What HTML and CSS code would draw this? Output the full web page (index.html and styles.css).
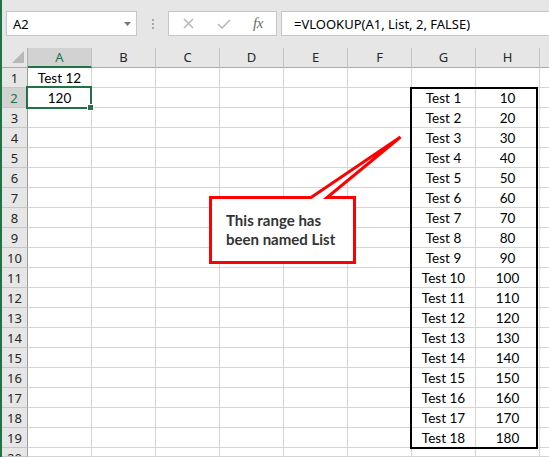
FILE: index.html
```html
<!DOCTYPE html>
<html>
<head>
<meta charset="utf-8">
<link rel="stylesheet" href="styles.css">
</head>
<body>
<div class="app">
  <div class="fbar">
    <div class="namebox"><span>A2</span><svg class="caret" width="7" height="4" viewBox="0 0 7 4"><path d="M0 0H7L3.5 4Z"/></svg></div>
    <div class="sep"><i></i><i></i><i></i></div>
    <div class="icons">
      <span class="ic ic-x"><svg width="11" height="11" viewBox="0 0 11 11"><path d="M1 1L10 10M10 1L1 10"/></svg></span>
      <span class="ic ic-ok"><svg width="14" height="10" viewBox="0 0 14 10"><path d="M1 5L5 9L13 1"/></svg></span>
      <span class="ic ic-fx">fx</span>
    </div>
    <div class="formula">=VLOOKUP(A1, List, 2, FALSE)</div>
  </div>
  <div class="sheet">
    <div class="corner"><span class="tri"></span></div><div class="ch sel">A</div><div class="ch">B</div><div class="ch">C</div><div class="ch">D</div><div class="ch">E</div><div class="ch">F</div><div class="ch">G</div><div class="ch">H</div><div class="ch last"></div>

    <div class="rh">1</div><div class="c">Test 12</div><div class="c"></div><div class="c"></div><div class="c"></div><div class="c"></div><div class="c"></div><div class="c"></div><div class="c"></div><div class="c last"></div>
    <div class="rh sel">2</div><div class="c anchor">120<span class="selbox"></span><span class="handle"></span></div><div class="c"></div><div class="c"></div><div class="c"></div><div class="c"></div><div class="c"></div><div class="c anchor">Test 1<span class="rangebox"></span></div><div class="c">10</div><div class="c last"></div>
    <div class="rh">3</div><div class="c"></div><div class="c"></div><div class="c"></div><div class="c"></div><div class="c"></div><div class="c"></div><div class="c">Test 2</div><div class="c">20</div><div class="c last"></div>
    <div class="rh">4</div><div class="c"></div><div class="c"></div><div class="c"></div><div class="c"></div><div class="c"></div><div class="c"></div><div class="c">Test 3</div><div class="c">30</div><div class="c last"></div>
    <div class="rh">5</div><div class="c"></div><div class="c"></div><div class="c"></div><div class="c"></div><div class="c"></div><div class="c"></div><div class="c">Test 4</div><div class="c">40</div><div class="c last"></div>
    <div class="rh">6</div><div class="c"></div><div class="c"></div><div class="c"></div><div class="c"></div><div class="c"></div><div class="c"></div><div class="c">Test 5</div><div class="c">50</div><div class="c last"></div>
    <div class="rh">7</div><div class="c"></div><div class="c"></div><div class="c"></div><div class="c"></div><div class="c"></div><div class="c"></div><div class="c">Test 6</div><div class="c">60</div><div class="c last"></div>
    <div class="rh">8</div><div class="c"></div><div class="c"></div><div class="c"></div><div class="c"></div><div class="c"></div><div class="c"></div><div class="c">Test 7</div><div class="c">70</div><div class="c last"></div>
    <div class="rh">9</div><div class="c"></div><div class="c"></div><div class="c"></div><div class="c"></div><div class="c"></div><div class="c"></div><div class="c">Test 8</div><div class="c">80</div><div class="c last"></div>
    <div class="rh">10</div><div class="c"></div><div class="c"></div><div class="c"></div><div class="c"></div><div class="c"></div><div class="c"></div><div class="c">Test 9</div><div class="c">90</div><div class="c last"></div>
    <div class="rh">11</div><div class="c"></div><div class="c"></div><div class="c"></div><div class="c"></div><div class="c"></div><div class="c"></div><div class="c">Test 10</div><div class="c">100</div><div class="c last"></div>
    <div class="rh">12</div><div class="c"></div><div class="c"></div><div class="c"></div><div class="c"></div><div class="c"></div><div class="c"></div><div class="c">Test 11</div><div class="c">110</div><div class="c last"></div>
    <div class="rh">13</div><div class="c"></div><div class="c"></div><div class="c"></div><div class="c"></div><div class="c"></div><div class="c"></div><div class="c">Test 12</div><div class="c">120</div><div class="c last"></div>
    <div class="rh">14</div><div class="c"></div><div class="c"></div><div class="c"></div><div class="c"></div><div class="c"></div><div class="c"></div><div class="c">Test 13</div><div class="c">130</div><div class="c last"></div>
    <div class="rh">15</div><div class="c"></div><div class="c"></div><div class="c"></div><div class="c"></div><div class="c"></div><div class="c"></div><div class="c">Test 14</div><div class="c">140</div><div class="c last"></div>
    <div class="rh">16</div><div class="c"></div><div class="c"></div><div class="c"></div><div class="c"></div><div class="c"></div><div class="c"></div><div class="c">Test 15</div><div class="c">150</div><div class="c last"></div>
    <div class="rh">17</div><div class="c"></div><div class="c"></div><div class="c"></div><div class="c"></div><div class="c"></div><div class="c"></div><div class="c">Test 16</div><div class="c">160</div><div class="c last"></div>
    <div class="rh">18</div><div class="c"></div><div class="c"></div><div class="c"></div><div class="c"></div><div class="c"></div><div class="c"></div><div class="c">Test 17</div><div class="c">170</div><div class="c last"></div>
    <div class="rh">19</div><div class="c"></div><div class="c"></div><div class="c"></div><div class="c"></div><div class="c"></div><div class="c"></div><div class="c">Test 18</div><div class="c">180</div><div class="c last"></div>
    <div class="rh">20</div><div class="c"></div><div class="c"></div><div class="c"></div><div class="c"></div><div class="c"></div><div class="c"></div><div class="c"></div><div class="c"></div><div class="c last"></div>
  </div>
  <svg class="callout" width="549" height="457" viewBox="0 0 549 457">
    <path class="shape" d="M210.5 197.5H311L400.5 137L327 197.5H354.5V262.5H210.5Z"/>
    <text class="ctext" x="226" y="226">This range has</text>
    <text class="ctext" x="226" y="245">been named List</text>
  </svg>
</div>
</body>
</html>
```
FILE: styles.css
```css
html, body {
  margin: 0;
  padding: 0;
}
body {
  width: 549px;
  height: 457px;
  overflow: hidden;
  background: #fff;
}
.app {
  position: relative;
  width: 547px;
  height: 457px;
  border-left: 2px solid #217346;
  overflow: hidden;
  font-family: "Noto Sans", sans-serif;
}
.fbar {
  display: flex;
  align-items: flex-start;
  height: 48px;
  box-sizing: border-box;
  padding: 11px 0 0 4px;
  background: #e6e6e6;
}
.namebox {
  width: 131px;
  height: 25px;
  box-sizing: border-box;
  border: 1px solid #c6c6c6;
  background: #fff;
  display: flex;
  align-items: center;
  justify-content: space-between;
  padding: 0 5px 0 6px;
  font-size: 13px;
  color: #000;
}
.caret path { fill: #777; }
.sep {
  width: 31px;
  height: 25px;
  display: flex;
  flex-direction: column;
  align-items: center;
  justify-content: center;
  gap: 2px;
}
.sep i {
  display: block;
  width: 2px;
  height: 2px;
  background: #a6a6a6;
}
.icons {
  width: 109px;
  height: 25px;
  box-sizing: border-box;
  border: 1px solid #c6c6c6;
  background: #fff;
  display: flex;
  align-items: center;
}
.ic {
  display: flex;
  justify-content: center;
  align-items: center;
  width: 34px;
  height: 23px;
}
.ic-x { width: 38px; }
.ic svg path {
  fill: none;
  stroke: #b9b9b9;
  stroke-width: 1.6;
}
.ic-fx {
  font-family: "Liberation Serif", serif;
  font-style: italic;
  font-size: 15px;
  color: #6b6b6b;
  letter-spacing: -0.5px;
}
.formula {
  flex: 1;
  height: 25px;
  margin-left: 4px;
  margin-right: -2px;
  box-sizing: border-box;
  border: 1px solid #c6c6c6;
  background: #fff;
  font-size: 13px;
  line-height: 21px;
  padding: 2px 0 0 12px;
  color: #000;
  white-space: nowrap;
}
.sheet {
  display: grid;
  grid-template-columns: 26px repeat(8, 64px) 1fr;
  grid-template-rows: repeat(20, 20px) 1fr;
  height: 409px;
}
.sheet > div {
  box-sizing: border-box;
  white-space: nowrap;
}
.corner {
  background: #e6e6e6;
  border-right: 1px solid #ababab;
  border-bottom: 1px solid #ababab;
  display: flex;
  justify-content: flex-end;
  align-items: flex-end;
  padding: 0 3px 4px 0;
}
.tri {
  display: block;
  width: 12px;
  height: 12px;
  background: #b8b8b8;
  clip-path: polygon(100% 0, 100% 100%, 0 100%);
}
.ch {
  background: #e6e6e6;
  border-right: 1px solid #c2c2c2;
  border-bottom: 1px solid #ababab;
  text-align: center;
  font-size: 13px;
  line-height: 19px;
  color: #262626;
}
.ch.sel {
  background: #d2d2d2;
  color: #217346;
  border-bottom: 2px solid #217346;
}
.ch.last { border-right: none; }
.rh {
  background: #e6e6e6;
  border-right: 1px solid #9e9e9e;
  border-bottom: 1px solid #c6c6c6;
  text-align: center;
  font-size: 13px;
  line-height: 19px;
  padding-top: 1px;
  color: #262626;
  overflow: hidden;
}
.rh.sel {
  background: #d2d2d2;
  color: #217346;
  border-right: 2px solid #217346;
}
.c {
  border-right: 1px solid #d4d4d4;
  border-bottom: 1px solid #d4d4d4;
  font-family: "Lato", sans-serif;
  font-size: 13.5px;
  line-height: 19px;
  padding-top: 1px;
  text-align: center;
  color: #000;
}
.c.last { border-right: none; }
.anchor { position: relative; }
.selbox {
  position: absolute;
  left: -2px;
  right: -1px;
  top: -2px;
  bottom: -2px;
  border: 2px solid #217346;
}
.handle {
  position: absolute;
  right: -3px;
  bottom: -4px;
  width: 5px;
  height: 5px;
  background: #217346;
  border: 1px solid #fff;
}
.rangebox {
  position: absolute;
  left: -2px;
  top: -1px;
  width: 128px;
  height: 362px;
  box-sizing: border-box;
  border: 2px solid #000;
}
.callout {
  position: absolute;
  left: -2px;
  top: 0;
  pointer-events: none;
}
.shape {
  fill: #fff;
  stroke: #ff0000;
  stroke-width: 3;
}
.ctext {
  font-family: "Lato", sans-serif;
  font-weight: bold;
  font-size: 15px;
  fill: #333;
}
```
